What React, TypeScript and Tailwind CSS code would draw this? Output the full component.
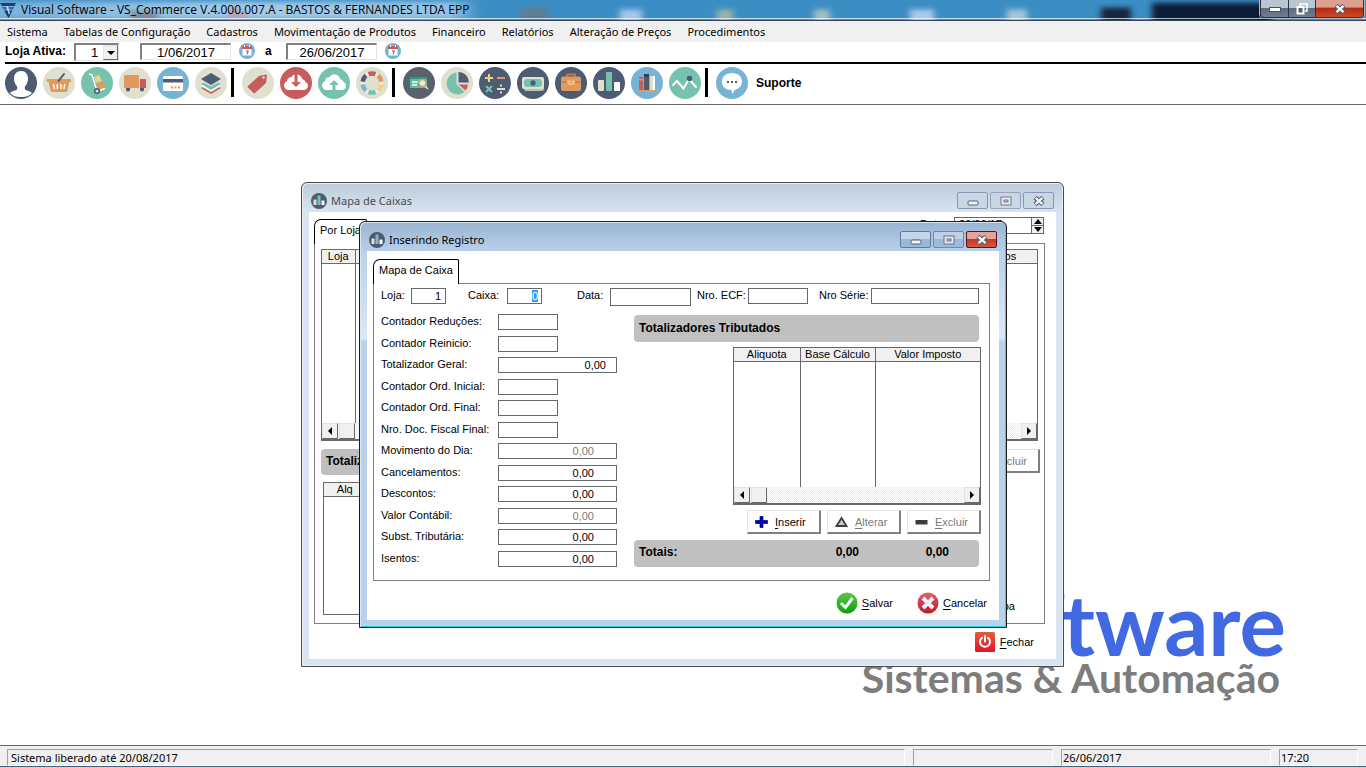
import { useEffect, useRef, type ReactNode } from "react";

const ui = "font-['Noto_Sans','Open_Sans',sans-serif]";

function Round({ bg, children }: { bg: string; children: ReactNode }) {
  return (
    <svg viewBox="0 0 32 32" className="size-8" aria-hidden="true">
      <circle cx="16" cy="16" r="16" fill={bg} />
      {children}
    </svg>
  );
}

const NAVY = "#4d5b73";
const SAND = "#e0e0d1";
const TEAL = "#76c2af";
const BLUE = "#77b3d4";
const RED = "#c75c5c";
const ORANGE = "#e0995e";
const YELLOW = "#f5cf87";

function Bars() {
  return (
    <>
      <rect x="5" y="13" width="6" height="11" rx="1" fill={SAND} />
      <rect x="13" y="5" width="6" height="19" rx="1" fill={TEAL} />
      <rect x="21" y="15" width="6" height="9" rx="1" fill="#fff" />
    </>
  );
}

type Tool = { name: string; bg: string; art: ReactNode };

const groupOne: Tool[] = [
  {
    name: "Clientes",
    bg: NAVY,
    art: (
      <path
        fill="#fff"
        d="M16 4c4.600 0 7 3.200 7 7.500 0 3.300-1.300 6.200-3.200 7.900v2.600c0 1.600 6.200 2 7.200 4.200A15 15 0 0 1 16 30a15 15 0 0 1-11-3.800c1-2.200 7.200-2.600 7.200-4.200v-2.600C10.300 17.700 9 14.800 9 11.500 9 7.200 11.400 4 16 4z"
      />
    ),
  },
  {
    name: "Vendas",
    bg: SAND,
    art: (
      <>
        <path fill={ORANGE} d="M4 12h24v3h-1.500L24 25H8L5.500 15H4z" />
        <path stroke="#fff" strokeWidth="1.400" d="M10.500 17l.8 5M14.300 17v5M18 17v5M21.700 17l-.8 5" />
        <path stroke={NAVY} strokeWidth="2" strokeLinecap="round" d="M15.500 14L21 7" />
      </>
    ),
  },
  {
    name: "Estoque",
    bg: TEAL,
    art: (
      <>
        <path fill="none" stroke="#fff" strokeWidth="1.500" d="M8 7l3 1 5 16" />
        <path fill={YELLOW} d="M13 10l5-2 3 6-6 2z" />
        <path fill={ORANGE} d="M15.500 16.500l7-2 2 6-7 2.500z" />
        <path stroke="#fff" strokeWidth="1.500" d="M17 24l7-2.500" />
        <circle cx="16" cy="24" r="2.300" fill={SAND} stroke={NAVY} strokeWidth="1.500" />
      </>
    ),
  },
  {
    name: "Entregas",
    bg: SAND,
    art: (
      <>
        <rect x="5" y="8" width="15" height="13" rx="1" fill={ORANGE} />
        <path fill={RED} d="M21 12h5a1 1 0 0 1 1 1v8h-6z" />
        <path fill={NAVY} d="M7 21h4v1.500a2 2 0 0 1-4 0zM21 21h4v1.500a2 2 0 0 1-4 0z" />
      </>
    ),
  },
  {
    name: "Cartões",
    bg: BLUE,
    art: (
      <>
        <rect x="6" y="9" width="20" height="15" rx="1.500" fill="#fff" />
        <path fill={NAVY} d="M6 12h20v3.500H6z" />
        <path fill={ORANGE} d="M14 19.500h2v2h-2zM17.500 19.500h2v2h-2zM21 19.500h2v2h-2z" />
      </>
    ),
  },
  {
    name: "Camadas",
    bg: SAND,
    art: (
      <>
        <path fill={RED} d="M6 21l10-5 10 5-10 6z" />
        <path fill="#fff" d="M6 19l10-5 10 5-10 6z" />
        <path fill={TEAL} d="M6 17l10-5 10 5-10 6z" />
        <path fill={SAND} d="M6 14l10-5 10 5-10 5.500z" />
        <path fill={NAVY} d="M6 12l10-6 10 6-10 6z" />
      </>
    ),
  },
];

const cloud =
  "M8.500 23A4.500 4.500 0 0 1 7 14.300a4 4 0 0 1 4.200-4 6 6 0 0 1 11 1.700A4.500 4.500 0 0 1 25.500 15a4.200 4.200 0 0 1-1.500 8z";

const groupTwo: Tool[] = [
  {
    name: "Etiquetas",
    bg: SAND,
    art: (
      <>
        <path fill={RED} d="M6 19L17 9l7-1.500 1 1L24 16 13 26a1 1 0 0 1-1.500 0L6 20.500a1 1 0 0 1 0-1.500z" />
        <circle cx="21.500" cy="10.500" r="1.300" fill={SAND} />
      </>
    ),
  },
  {
    name: "Receber",
    bg: RED,
    art: (
      <>
        <path fill="#fff" d={cloud} />
        <path fill={RED} d="M14.500 7h3v8h3.500l-5 5-5-5h3.500z" />
      </>
    ),
  },
  {
    name: "Enviar",
    bg: TEAL,
    art: (
      <>
        <path fill="#fff" d={cloud} />
        <path fill={TEAL} d="M14.500 24h3v-6H21l-5-5-5 5h3.500z" />
      </>
    ),
  },
  {
    name: "Ajuda",
    bg: SAND,
    art: (
      <g fill="none" strokeWidth="4.500">
        <circle cx="16" cy="16" r="9.500" stroke="#fff" strokeWidth="4" opacity=".35" />
        <path stroke={RED} d="M12.500 7.200a9.500 9.500 0 0 1 7 0" />
        <path stroke={ORANGE} d="M22 8.600a9.500 9.500 0 0 1 3.400 6" />
        <path stroke={YELLOW} d="M25.400 17.500a9.500 9.500 0 0 1-3.400 6" />
        <path stroke={TEAL} d="M19.500 24.800a9.500 9.500 0 0 1-7 0" />
        <path stroke={BLUE} d="M10 23.500a9.500 9.500 0 0 1-3.400-6" />
        <path stroke={NAVY} d="M6.600 14.600a9.500 9.500 0 0 1 3.400-6" />
      </g>
    ),
  },
];

const groupThree: Tool[] = [
  {
    name: "Cheques",
    bg: "#58616d",
    art: (
      <>
        <rect x="7" y="10" width="17" height="11" fill="#4fc3a1" />
        <path fill="#2f9c80" d="M7 10h17v2H7z" />
        <path stroke="#fff" strokeWidth="1.500" d="M9 15h6M9 18h5" />
        <circle cx="19.500" cy="16" r="3.500" fill="#d8f0ea" stroke={ORANGE} strokeWidth="1.500" />
        <path stroke={SAND} strokeWidth="1.500" d="M22 19l3 3" />
      </>
    ),
  },
  {
    name: "Gráficos",
    bg: SAND,
    art: (
      <>
        <path fill={TEAL} d="M15.500 5.500V17l8 8A11 11 0 1 1 15.500 5.500z" />
        <path fill={NAVY} d="M17.500 5A10.500 10.500 0 0 1 28 15.500H17.500z" />
        <path fill={RED} d="M17.500 17.500H27a10 10 0 0 1-2.500 6z" />
      </>
    ),
  },
  {
    name: "Cálculos",
    bg: NAVY,
    art: (
      <>
        <path stroke={YELLOW} strokeWidth="2" d="M6 11h8M10 7v8" />
        <path stroke={ORANGE} strokeWidth="2" d="M18 11h8" />
        <path stroke={TEAL} strokeWidth="2" d="M7 19l6 6M13 19l-6 6" />
        <path stroke={SAND} strokeWidth="2" d="M18 22h8M21 18.500h2M21 25.500h2" />
      </>
    ),
  },
  {
    name: "Dinheiro",
    bg: NAVY,
    art: (
      <>
        <rect x="7" y="13" width="20" height="11" rx="2" fill="#b9bfb3" />
        <rect x="5" y="10" width="22" height="12" rx="2" fill={SAND} />
        <path fill={TEAL} d="M9 12h14l2 2v4l-2 2H9l-2-2v-4z" />
        <circle cx="16" cy="16" r="2.700" fill={NAVY} />
      </>
    ),
  },
  {
    name: "Negócios",
    bg: NAVY,
    art: (
      <>
        <path fill="none" stroke="#c07a44" strokeWidth="1.800" d="M12 10V7.500h8V10" />
        <rect x="6" y="9.500" width="20" height="14.500" rx="2" fill={ORANGE} />
        <path stroke="#b4743f" d="M6 15h20" />
        <path fill="none" stroke={YELLOW} strokeWidth="1.500" d="M13 14.500h6v1a2 2 0 0 1-2 1.500h-2a2 2 0 0 1-2-1.500z" />
      </>
    ),
  },
  { name: "Mapa de caixas", bg: NAVY, art: <Bars /> },
  {
    name: "Livros",
    bg: BLUE,
    art: (
      <>
        <path fill={RED} d="M8 10h4v13H8z" />
        <path fill={ORANGE} d="M8 12h4v1.500H8z" />
        <path fill={NAVY} d="M13 7h5v16h-5z" />
        <path fill="#33405a" d="M13 7h5v3h-5z" />
        <path fill={SAND} d="M19 9h5v14h-5z" />
        <path fill="#fff" d="M22 9h2v14h-2z" />
        <path fill={ORANGE} d="M6 23h20v2H6z" />
      </>
    ),
  },
  {
    name: "Indicadores",
    bg: TEAL,
    art: (
      <>
        <path fill="none" stroke="#fff" strokeWidth="2" strokeLinecap="round" d="M4 18l4-4 6.500 7.500L20 12l7 8" />
        <circle cx="20.500" cy="11.500" r="2.700" fill={NAVY} />
      </>
    ),
  },
];

function ToolGroup({ tools }: { tools: Tool[] }) {
  return (
    <div className="flex gap-1.5">
      {tools.map((t) => (
        <button key={t.name} type="button" aria-label={t.name} className="size-8">
          <Round bg={t.bg}>{t.art}</Round>
        </button>
      ))}
    </div>
  );
}

function Separator() {
  return <div className="mr-2 ml-1 h-[29px] w-[3px] bg-black" />;
}

function CalendarButton({ label }: { label: string }) {
  return (
    <button type="button" aria-label={label} className="ml-2 size-4">
      <svg viewBox="0 0 16 16" className="size-4">
        <circle cx="8" cy="8" r="8" fill={BLUE} />
        <rect x="3.500" y="4" width="9" height="8.500" fill="#fff" />
        <path fill={RED} d="M3 3h10v3H3z" />
        <path stroke="#fff" d="M5.500 2v2M10.500 2v2" />
        <path fill="none" stroke={NAVY} d="M7 8h2.300L8 11.300" />
      </svg>
    </button>
  );
}

function Glyph({ kind }: { kind: "min" | "max" | "close" }) {
  return (
    <svg viewBox="0 0 12 10" className="h-[10px] w-3" aria-hidden="true">
      {kind === "min" && <rect x="1" y="5" width="10" height="4" rx="1" fill="#f4f4f4" stroke="#5a5f72" />}
      {kind === "max" && (
        <>
          <rect x="1" y="1" width="10" height="8" fill="#f4f4f4" stroke="#5a5f72" />
          <rect x="4" y="4" width="4" height="2" fill="#b9cbe0" stroke="#5a5f72" />
        </>
      )}
      {kind === "close" && (
        <>
          <path stroke="#5a5f72" strokeWidth="4.500" d="M2 1.500l8 7M10 1.500l-8 7" />
          <path stroke="#f6f6f6" strokeWidth="2.300" d="M2.500 1.800l7 6.400M9.500 1.800l-7 6.400" />
        </>
      )}
    </svg>
  );
}

function WindowFrame({
  title,
  active,
  className,
  children,
}: {
  title: string;
  active: boolean;
  className: string;
  children: ReactNode;
}) {
  const frame = active
    ? "border-[#1c1c1c] bg-[linear-gradient(#99b4d1_0px,#b9d1ea_30px,#dbe8f6_116px,#b9d1ea_120px)] shadow-[inset_1px_1px_0_#d9e6f3,inset_-1px_-1px_0_#27d3e4]"
    : "border-[#4b4b4b] bg-[linear-gradient(#bdccd9_0px,#d8e4f2_30px)] shadow-[inset_1px_1px_0_#e6eef6,inset_-1px_-1px_0_#e6eef6]";
  const plain = active
    ? "border-[#5f7ba3] bg-[linear-gradient(#c3d6ea_50%,#9ab8d8_50%)]"
    : "border-[#8a97b4] bg-[#c9d7e5]";
  const close = active ? "border-[#5a1420] bg-[linear-gradient(#e6a198_50%,#c03a26_50%,#d4583c)]" : plain;
  return (
    <section aria-label={title} className={`absolute flex flex-col rounded-t-md border px-[7px] pb-[7px] ${frame} ${className}`}>
      <header className="flex h-[29px] items-center gap-1 pt-[6px] pr-[2px] pl-[2px]">
        <svg viewBox="0 0 32 32" className="size-4" aria-hidden="true">
          <circle cx="16" cy="16" r="16" fill={NAVY} />
          <Bars />
        </svg>
        <h2 className={`flex-1 text-[11px] leading-4 ${ui} ${active ? "text-black" : "text-[#4c4c4c]"}`}>{title}</h2>
        <div className="flex gap-0.5">
          <button type="button" aria-label="Minimizar" className={`flex h-[17px] w-[31px] items-center justify-center rounded-[2px] border ${plain}`}>
            <Glyph kind="min" />
          </button>
          <button type="button" aria-label="Maximizar" className={`flex h-[17px] w-[31px] items-center justify-center rounded-[2px] border opacity-80 ${plain}`}>
            <Glyph kind="max" />
          </button>
          <button type="button" aria-label="Fechar janela" className={`flex h-[17px] w-[31px] items-center justify-center rounded-[2px] border ${close}`}>
            <Glyph kind="close" />
          </button>
        </div>
      </header>
      <div className="flex flex-1 flex-col bg-white">{children}</div>
    </section>
  );
}

function Tab({ label }: { label: string }) {
  return (
    <button
      type="button"
      role="tab"
      aria-selected="true"
      className="relative -mb-px h-[25px] rounded-tl-[7px] rounded-tr-[2px] border border-b-0 border-black bg-white px-[5px] pb-1 leading-4"
    >
      {label}
    </button>
  );
}

const box = "border border-[#696969] bg-white text-right outline-none h-4";

function InlineField({
  id,
  label,
  value,
  labelClass,
  inputClass,
}: {
  id: string;
  label: string;
  value?: string;
  labelClass: string;
  inputClass: string;
}) {
  return (
    <>
      <label htmlFor={id} className={`shrink-0 leading-[14px] ${labelClass}`}>
        {label}
      </label>
      <input id={id} defaultValue={value} className={`min-w-0 pr-1 ${box} ${inputClass}`} />
    </>
  );
}

type Row = { id: string; label: string; value?: string; wide?: string; disabled?: boolean };

const rows: Row[] = [
  { id: "reducoes", label: "Contador Reduções:" },
  { id: "reinicio", label: "Contador Reinicio:" },
  { id: "geral", label: "Totalizador Geral:", value: "0,00", wide: "pr-[10px]" },
  { id: "ordini", label: "Contador Ord. Inicial:" },
  { id: "ordfim", label: "Contador Ord. Final:" },
  { id: "docfim", label: "Nro. Doc. Fiscal Final:" },
  { id: "movimento", label: "Movimento do Dia:", value: "0,00", wide: "pr-[22px]", disabled: true },
  { id: "cancel", label: "Cancelamentos:", value: "0,00", wide: "pr-[22px]" },
  { id: "descontos", label: "Descontos:", value: "0,00", wide: "pr-[22px]" },
  { id: "contabil", label: "Valor Contábil:", value: "0,00", wide: "pr-[22px]", disabled: true },
  { id: "subst", label: "Subst. Tributária:", value: "0,00", wide: "pr-[22px]" },
  { id: "isentos", label: "Isentos:", value: "0,00", wide: "pr-[22px]" },
];

function Arrow({ left }: { left?: boolean }) {
  return (
    <button
      type="button"
      aria-label={left ? "Rolar para a esquerda" : "Rolar para a direita"}
      className="flex size-4 items-center justify-center border border-t-[#e3e3e3] border-r-[#696969] border-b-[#696969] border-l-[#e3e3e3] bg-[#f0f0f0]"
    >
      <svg viewBox="0 0 4 8" className="h-2 w-1">
        <path d={left ? "M4 0v8L0 4z" : "M0 0v8l4-4z"} />
      </svg>
    </button>
  );
}

function ScrollStrip() {
  return (
    <div className="flex h-4 bg-[repeating-conic-gradient(#fff_0_25%,#ececec_0_50%)] bg-[length:2px_2px]">
      <Arrow left />
      <div className="ml-px size-4 border border-t-[#e3e3e3] border-r-[#696969] border-b-[#696969] border-l-[#e3e3e3] bg-[#f0f0f0]" />
      <div className="flex-1" />
      <Arrow />
    </div>
  );
}

function Grid({ columns, className, scroll }: { columns: { name: string; width: string }[]; className: string; scroll?: boolean }) {
  return (
    <div className={`flex flex-col border border-[#696969] ${scroll ? "border-b-2" : ""} ${className}`}>
      <table className="w-full flex-1 table-fixed border-collapse">
        <thead>
          <tr className="h-[13px]">
            {columns.map((c) => (
              <th
                key={c.name}
                scope="col"
                className={`border-r border-b border-[#696969] bg-[#f0f0f0] p-0 text-center leading-3 font-normal last:border-r-0 ${c.width}`}
              >
                {c.name}
              </th>
            ))}
          </tr>
        </thead>
        <tbody>
          <tr>
            {columns.map((c) => (
              <td key={c.name} className="border-r border-[#696969] p-0 last:border-r-0" />
            ))}
          </tr>
        </tbody>
      </table>
      {scroll && <ScrollStrip />}
    </div>
  );
}

function Accel({ text }: { text: string }) {
  return (
    <span>
      <span className="underline underline-offset-2">{text[0]}</span>
      {text.slice(1)}
    </span>
  );
}

function EditButton({ text, disabled, icon }: { text: string; disabled?: boolean; icon: ReactNode }) {
  return (
    <button
      type="button"
      disabled={disabled}
      className="flex h-6 w-[74px] items-center border-t border-r-2 border-b-2 border-l border-t-[#e3e3e3] border-r-[#808080] border-b-[#808080] border-l-[#e3e3e3] bg-white pl-[7px] disabled:text-[#7a7a7a]"
    >
      <svg viewBox="0 0 13 12" className="mr-[7px] h-3 w-[13px]" aria-hidden="true">
        {icon}
      </svg>
      <Accel text={text} />
    </button>
  );
}

const plus = <path fill="#0000c8" stroke="#000060" strokeWidth=".7" d="M5 .5h3v4h4.500v3H8v4H5v-4H.500v-3H5z" />;
const triangle = <path fill="#c8c8c8" stroke="#404040" strokeWidth="1.800" d="M6.500 2L11.500 10H1.500z" />;
const minus = <path fill="#3c3c3c" d="M.500 4h12v4.500H.500z" />;

function EntryDialog() {
  const caixa = useRef<HTMLInputElement>(null);
  useEffect(() => {
    caixa.current?.focus();
    caixa.current?.select();
  }, []);
  return (
    <WindowFrame title="Inserindo Registro" active className="top-[116px] left-[359px] h-[407px] w-[648px]">
      <div className="flex flex-1 flex-col pt-2 pr-[9px] pl-[6px]">
        <div role="tablist" className="flex">
          <Tab label="Mapa de Caixa" />
        </div>
        <form className="flex-1 border border-[#808080] pt-1 pl-[7px]">
          <div className="flex items-start pr-[10px]">
            <InlineField id="loja" label="Loja:" value="1" labelClass="w-[30px]" inputClass="w-[35px]" />
            <label htmlFor="caixa" className="ml-[22px] w-[39px] leading-[14px]">
              Caixa:
            </label>
            <input
              id="caixa"
              ref={caixa}
              defaultValue="0"
              className={`w-[35px] pr-[3px] selection:bg-[#3399ff] selection:text-white ${box}`}
            />
            <InlineField id="data" label="Data:" labelClass="ml-[35px] w-[33px]" inputClass="w-[81px] h-[18px]" />
            <InlineField id="ecf" label="Nro. ECF:" labelClass="ml-[6px] w-[51px]" inputClass="w-[60px]" />
            <InlineField id="serie" label="Nro Série:" labelClass="ml-[11px] w-[52px]" inputClass="flex-1" />
          </div>
          <div className="mt-2 flex gap-[17px] pr-2">
            <div className="flex h-[253px] w-[236px] flex-col justify-between">
              {rows.map((r) => (
                <div key={r.id} className="flex items-start">
                  <label htmlFor={r.id} className="w-[117px] leading-[14px]">
                    {r.label}
                  </label>
                  <input
                    id={r.id}
                    defaultValue={r.value}
                    disabled={r.disabled}
                    className={`${box} disabled:text-[#7a7a7a] ${r.wide ? `w-[119px] ${r.wide}` : "w-[60px]"}`}
                  />
                </div>
              ))}
            </div>
            <div className="flex flex-1 flex-col pt-px">
              <h3 className="mr-0.5 flex h-[27px] items-center rounded bg-[#c0c0c0] px-[5px] pb-0.5 text-[12px] leading-[14px] font-bold">
                Totalizadores Tributados
              </h3>
              <Grid
                scroll
                className="mt-[5px] h-[158px] w-[248px] self-end"
                columns={[
                  { name: "Aliquota", width: "w-[66px]" },
                  { name: "Base Cálculo", width: "w-[75px]" },
                  { name: "Valor Imposto", width: "w-auto" },
                ]}
              />
              <div className="mt-[5px] flex justify-end gap-1.5">
                <EditButton text="Inserir" icon={plus} />
                <EditButton text="Alterar" disabled icon={triangle} />
                <EditButton text="Excluir" disabled icon={minus} />
              </div>
              <div className="mt-[6px] mr-0.5 flex h-[27px] items-center rounded bg-[#c0c0c0] pr-[30px] pb-1 pl-[5px] text-[12px] leading-[14px] font-bold">
                <span className="flex-1">Totais:</span>
                <span className="w-[90px]">0,00</span>
                <span>0,00</span>
              </div>
            </div>
          </div>
        </form>
        <div className="flex h-[39px] items-center justify-end gap-6 pt-[5px] pr-[3px]">
          <button type="button" className="flex items-center gap-1">
            <svg viewBox="0 0 22 22" className="size-[22px]" aria-hidden="true">
              <defs>
                <linearGradient id="ok" x1="0" y1="0" x2="0" y2="1">
                  <stop offset="0" stopColor="#5fc84a" />
                  <stop offset="1" stopColor="#0aa00a" />
                </linearGradient>
              </defs>
              <circle cx="11" cy="11" r="10.500" fill="url(#ok)" />
              <path fill="none" stroke="#f2f7ff" strokeWidth="3" d="M5 11l4.500 4.500L16.500 6" />
            </svg>
            <Accel text="Salvar" />
          </button>
          <button type="button" className="flex items-center gap-1">
            <svg viewBox="0 0 22 22" className="size-[22px]" aria-hidden="true">
              <defs>
                <linearGradient id="no" x1="0" y1="0" x2="0" y2="1">
                  <stop offset="0" stopColor="#dd6670" />
                  <stop offset="1" stopColor="#c4161f" />
                </linearGradient>
              </defs>
              <circle cx="11" cy="11" r="10.500" fill="url(#no)" />
              <path stroke="#eef2fc" strokeWidth="4" d="M6 6l10 10M16 6L6 16" />
            </svg>
            <Accel text="Cancelar" />
          </button>
        </div>
      </div>
    </WindowFrame>
  );
}

function MapWindow() {
  return (
    <WindowFrame title="Mapa de Caixas" active={false} className="top-[77px] left-[301px] h-[485px] w-[763px]">
      <div className="flex flex-1 flex-col pt-[5px] pr-[11px] pl-[5px]">
        <div className="flex items-start justify-between pr-px">
          <div role="tablist" className="flex pt-0.5">
            <Tab label="Por Loja" />
          </div>
          <div className="flex">
            <label htmlFor="mapdate" className="w-[34px] leading-[14px]">
              Data:
            </label>
            <div className="flex h-[17px] border border-[#696969]">
              <input id="mapdate" defaultValue="26/06/17" className="w-[76px] px-1 pb-1 outline-none" />
              <div className="flex w-3 flex-col divide-y divide-[#696969] border-l border-[#696969] bg-[#f0f0f0]">
                <button type="button" aria-label="Aumentar" className="flex flex-1 items-center justify-center">
                  <svg viewBox="0 0 8 5" className="h-[5px] w-2">
                    <path d="M0 5h8L4 0z" />
                  </svg>
                </button>
                <button type="button" aria-label="Diminuir" className="flex flex-1 items-center justify-center">
                  <svg viewBox="0 0 8 5" className="h-[5px] w-2">
                    <path d="M0 0h8L4 5z" />
                  </svg>
                </button>
              </div>
            </div>
          </div>
        </div>
        <div className="flex flex-1 flex-col border border-[#808080] pt-[5px] pr-1 pb-2 pl-[6px]">
          <Grid
            scroll
            className="mr-0.5 h-[192px]"
            columns={[
              { name: "Loja", width: "w-[33px]" },
              { name: "Caixa", width: "w-auto" },
              { name: "Descontos", width: "w-[94px]" },
            ]}
          />
          <div className="mt-2 flex items-start gap-4">
            <h3 className="flex h-[26px] flex-1 items-center rounded bg-[#c0c0c0] px-[5px] pb-0.5 text-[12px] leading-4 font-bold">
              Totalizadores
            </h3>
            <EditButton text="Excluir" disabled icon={minus} />
          </div>
          <div className="mt-[7px] flex flex-1 items-end justify-between pr-[25px] pl-0.5">
            <Grid
              className="w-[400px] self-stretch"
              columns={[
                { name: "Alq", width: "w-[42px]" },
                { name: "Base", width: "w-auto" },
              ]}
            />
            <button type="button" className="pb-0.5">
              Mapa
            </button>
          </div>
        </div>
        <div className="flex h-[35px] items-center justify-end pr-[11px]">
          <button type="button" className="flex items-center gap-[5px]">
            <svg viewBox="0 0 20 20" className="size-5" aria-hidden="true">
              <defs>
                <linearGradient id="off" x1="0" y1="0" x2="0" y2="1">
                  <stop offset="0" stopColor="#e0603c" />
                  <stop offset="1" stopColor="#e8102a" />
                </linearGradient>
              </defs>
              <rect width="20" height="20" rx="1.500" fill="url(#off)" />
              <path fill="none" stroke="#fff" strokeWidth="2" strokeLinecap="round" d="M7 5.800a5 5 0 1 0 6 0M10 4v5.500" />
            </svg>
            <Accel text="Fechar" />
          </button>
        </div>
      </div>
    </WindowFrame>
  );
}

const menus = [
  "Sistema",
  "Tabelas de Configuração",
  "Cadastros",
  "Movimentação de Produtos",
  "Financeiro",
  "Relatórios",
  "Alteração de Preços",
  "Procedimentos",
];

const sunken = "border border-t-[#a0a0a0] border-l-[#a0a0a0] border-r-white border-b-white";
const deep = "border border-t-2 border-l-2 border-t-[#808080] border-l-[#808080] border-r-[#e3e3e3] border-b-[#e3e3e3] bg-white";

function TitleBar() {
  return (
    <header className="relative flex h-[21px] items-start overflow-hidden border-b border-[#33475e] bg-[#3b8ec4]">
      <svg className="absolute inset-0 size-full" preserveAspectRatio="none" viewBox="0 0 1366 21" aria-hidden="true">
        <defs>
          <filter id="soft" x="-20%" y="-80%" width="140%" height="260%">
            <feGaussianBlur stdDeviation="3" />
          </filter>
          <linearGradient id="glow" x1="0" x2="1" y1="0" y2="0">
            <stop offset="0" stopColor="#78b0da" />
            <stop offset=".5" stopColor="#a4cbea" />
            <stop offset=".94" stopColor="#94c3e6" />
            <stop offset="1" stopColor="#3b8ec4" />
          </linearGradient>
        </defs>
        <rect x="-10" y="2" width="490" height="18" fill="url(#glow)" filter="url(#soft)" />
        <g filter="url(#soft)">
          <rect x="130" y="12" width="28" height="10" fill="#7f8798" />
          <rect x="228" y="10" width="18" height="10" fill="#b99fb8" />
          <rect x="520" y="8" width="28" height="16" fill="#5d7e92" />
          <rect x="620" y="10" width="22" height="14" fill="#a4c8ee" />
          <rect x="717" y="10" width="16" height="14" fill="#9ab4a8" />
          <rect x="814" y="10" width="16" height="14" fill="#a0bfc0" />
          <rect x="910" y="10" width="24" height="14" fill="#a9cbee" />
          <rect x="1007" y="10" width="20" height="14" fill="#a5c6d8" />
          <rect x="1101" y="8" width="30" height="16" fill="#17283a" />
          <rect x="1152" y="3" width="120" height="24" fill="#0c1c38" />
        </g>
        <path fill="#ffffff" opacity=".7" d="M0 19h1366v1H0z" />
      </svg>
      <div className="relative flex flex-1 items-center gap-[5px] pt-0.5">
        <svg viewBox="0 0 16 16" className="size-4" aria-hidden="true">
          <path fill="#1d3f73" d="M0 1h16l-1.500 3H2z" />
          <path fill="#2d6fae" d="M2 5h12l-1 2.500H3.500z" />
          <path fill="#143a68" d="M4 8.500h8.500L8.500 16z" />
          <path fill="#b9d9ef" d="M6 4h2l2 7-1 2z" />
        </svg>
        <h1 className="font-['Open_Sans','Noto_Sans',sans-serif] text-[12px] leading-4 text-black">
          Visual Software - VS_Commerce V.4.000.007.A - BASTOS &amp; FERNANDES LTDA EPP
        </h1>
      </div>
      <div className="relative mr-0.5 flex h-[18px] divide-x divide-[#2d3140] overflow-hidden rounded-b-[4px] border border-t-0 border-[#2d3140] shadow-[0_0_0_1px_#a9b8c8]">
        <button type="button" aria-label="Minimizar programa" className="flex w-7 items-center justify-center bg-[linear-gradient(#b9c6d2_45%,#5e6c80_50%,#6f7d90)]">
          <svg viewBox="0 0 12 6" className="h-[6px] w-3">
            <rect x=".5" y="1.500" width="11" height="4" fill="#fff" stroke="#4a5060" />
          </svg>
        </button>
        <button type="button" aria-label="Restaurar programa" className="flex w-[27px] items-center justify-center bg-[linear-gradient(#b9c6d2_45%,#5e6c80_50%,#6f7d90)]">
          <svg viewBox="0 0 12 12" className="size-3">
            <path fill="none" stroke="#fff" strokeWidth="1.500" d="M4 3V1h7v7H9" />
            <rect x="1.500" y="4" width="6" height="6.500" fill="#5a6070" stroke="#fff" strokeWidth="2" />
          </svg>
        </button>
        <button type="button" aria-label="Fechar programa" className="flex w-[47px] items-center justify-center bg-[linear-gradient(#dca090_40%,#b42a14_50%,#cc4c2a)]">
          <Glyph kind="close" />
        </button>
      </div>
    </header>
  );
}

export default function App() {
  return (
    <div className="flex h-screen flex-col overflow-hidden bg-white font-['Liberation_Sans',Arial,sans-serif] text-[11px] leading-[14px] text-black">
      <TitleBar />
      <nav className={`flex h-[21px] items-center gap-4 bg-[#f0f0f0] px-[7px] text-[11px] ${ui}`}>
        {menus.map((m) => (
          <button key={m} type="button" className="whitespace-nowrap">
            {m}
          </button>
        ))}
      </nav>
      <div className="ml-[5px] flex h-[22px] items-start border-b-2 border-black pt-px">
        <label htmlFor="lojaativa" className="w-[69px] pt-px text-[12px] font-bold">
          Loja Ativa:
        </label>
        <div className={`flex h-[18px] w-[45px] ${deep}`}>
          <select id="lojaativa" className="w-[27px] appearance-none pl-[15px] text-[13px] leading-4 outline-none">
            <option>1</option>
          </select>
          <span className="flex flex-1 items-center justify-center border border-t-[#e3e3e3] border-r-[#696969] border-b-[#696969] border-l-[#e3e3e3] bg-[#f0f0f0]">
            <svg viewBox="0 0 8 4" className="h-1 w-2" aria-hidden="true">
              <path d="M0 0h8L4 4z" />
            </svg>
          </span>
        </div>
        <input aria-label="Data inicial" defaultValue="1/06/2017" className={`ml-[21px] h-[17px] w-[91px] pt-px text-center text-[13px] outline-none ${deep}`} />
        <CalendarButton label="Escolher data inicial" />
        <span className="ml-[10px] w-[21px] pt-px text-[12px] font-bold">a</span>
        <input aria-label="Data final" defaultValue="26/06/2017" className={`h-[17px] w-[91px] pt-px text-center text-[13px] outline-none ${deep}`} />
        <CalendarButton label="Escolher data final" />
      </div>
      <div className="flex h-[41px] items-center border-b border-[#696969] pb-[3px] pl-[5px]">
        <ToolGroup tools={groupOne} />
        <Separator />
        <ToolGroup tools={groupTwo} />
        <Separator />
        <ToolGroup tools={groupThree} />
        <Separator />
        <button type="button" className="flex items-center gap-2 text-[12px] font-bold">
          <Round bg={BLUE}>
            <path fill="#fff" d="M16 6c6 0 10 3.500 10 8.500 0 4.500-3.500 7.500-7 8.200L16 27l-.5-4C9.500 23 6 19.500 6 14.500 6 9.500 10 6 16 6z" />
            <path fill={NAVY} d="M11 14h2v2h-2zM15 14h2v2h-2zM19 14h2v2h-2z" />
          </Round>
          Suporte
        </button>
      </div>
      <main className="relative flex flex-1 flex-col items-end justify-end pr-[80px] pb-[46px] font-['Lato',sans-serif] font-bold">
        <p className="text-[87px] leading-[68px] text-[#4169e1]">Software</p>
        <p className="mr-[6px] text-[41px] leading-[42px] text-[#7d7d7d]">Sistemas &amp; Automação</p>
        <div className="font-['Liberation_Sans',Arial,sans-serif] font-normal">
          <MapWindow />
          <EntryDialog />
        </div>
      </main>
      <footer className={`border-t border-[#696969] ${ui}`}>
        <div className="flex h-5 gap-2 bg-[#f0f0f0] pt-[3px] pr-2 pl-[7px] leading-4">
          <span className={`flex-1 pl-[3px] ${sunken}`}>Sistema liberado até 20/08/2017</span>
          <span className={`w-[140px] ${sunken}`} />
          <span className={`w-[210px] pl-px ${sunken}`}>26/06/2017</span>
          <span className={`w-[79px] pl-px ${sunken}`}>17:20</span>
        </div>
        <div className="h-0.5 border-t border-[#4a5f7a] bg-[#bcd6ee]" />
      </footer>
    </div>
  );
}
